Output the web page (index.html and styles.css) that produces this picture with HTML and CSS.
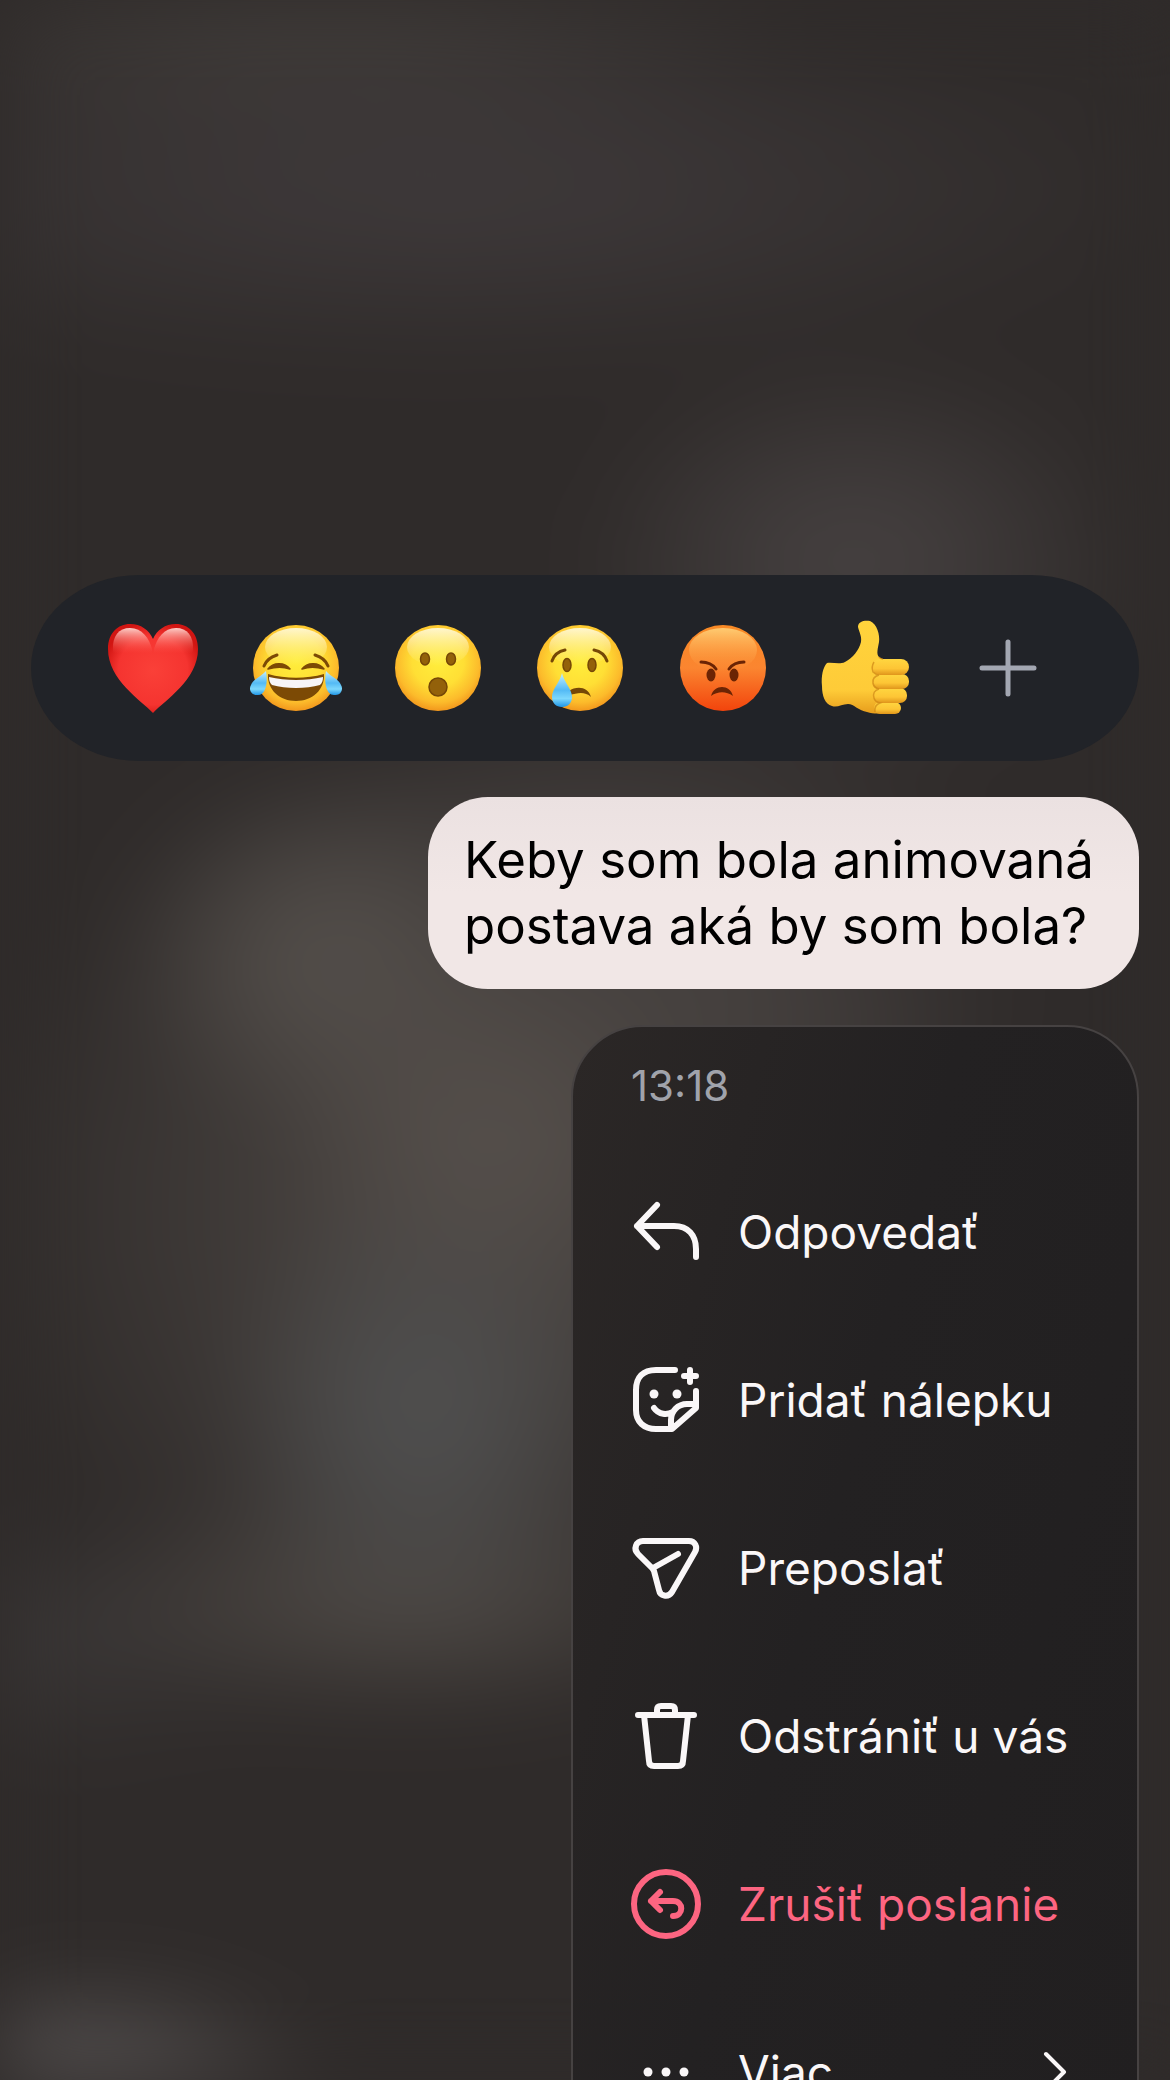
FILE: index.html
```html
<!DOCTYPE html>
<html lang="sk">
<head>
    <meta charset="UTF-8">
    <meta name="viewport" content="width=device-width, initial-scale=1.0">
    <title>Správa</title>
    <link rel="stylesheet" href="styles.css">
</head>
<body>
    <!-- Shared gradients for the emoji -->
    <svg class="defs" width="0" height="0" aria-hidden="true">
        <defs>
            <radialGradient id="face" cx="0.5" cy="0.42" r="0.6">
                <stop offset="0" stop-color="#ffee3c"/>
                <stop offset="0.5" stop-color="#ffdf35"/>
                <stop offset="0.8" stop-color="#fcbb2b"/>
                <stop offset="1" stop-color="#f0901a"/>
            </radialGradient>
            <linearGradient id="shine" x1="0" y1="0" x2="0" y2="1">
                <stop offset="0" stop-color="#fffbe0" stop-opacity="0.9"/>
                <stop offset="1" stop-color="#fff3a0" stop-opacity="0"/>
            </linearGradient>
            <linearGradient id="rage" x1="0" y1="0" x2="0" y2="1">
                <stop offset="0" stop-color="#f98a25"/>
                <stop offset="0.5" stop-color="#fb8530"/>
                <stop offset="1" stop-color="#f2440c"/>
            </linearGradient>
            <linearGradient id="rageShine" x1="0" y1="0" x2="0" y2="1">
                <stop offset="0" stop-color="#ffd27a" stop-opacity="0.9"/>
                <stop offset="1" stop-color="#ff9a40" stop-opacity="0"/>
            </linearGradient>
            <radialGradient id="heart" cx="0.5" cy="0.52" r="0.55">
                <stop offset="0" stop-color="#fa4038"/>
                <stop offset="0.7" stop-color="#f53430"/>
                <stop offset="1" stop-color="#d11512"/>
            </radialGradient>
            <linearGradient id="heartShine" x1="0" y1="0" x2="0" y2="1">
                <stop offset="0" stop-color="#ffd8d2" stop-opacity="0.95"/>
                <stop offset="0.7" stop-color="#ff5a50" stop-opacity="0"/>
            </linearGradient>
            <linearGradient id="tear" x1="0" y1="0" x2="0" y2="1">
                <stop offset="0" stop-color="#c4efff"/>
                <stop offset="0.5" stop-color="#53baf5"/>
                <stop offset="0.75" stop-color="#7dd8fd"/>
                <stop offset="1" stop-color="#1f95e6"/>
            </linearGradient>
            <linearGradient id="hand" x1="0" y1="0" x2="0" y2="1">
                <stop offset="0" stop-color="#ffd43c"/>
                <stop offset="0.75" stop-color="#fecb38"/>
                <stop offset="1" stop-color="#e79d1c"/>
            </linearGradient>
            <linearGradient id="finger" x1="0" y1="0" x2="0" y2="1">
                <stop offset="0" stop-color="#ffd640"/>
                <stop offset="0.6" stop-color="#fdc535"/>
                <stop offset="1" stop-color="#e0951b"/>
            </linearGradient>
        </defs>
    </svg>

    <main class="screen">
        <div class="reactions">
            <button class="reaction" aria-label="Srdce">
                <svg class="emoji" viewBox="0 0 96 96">
                    <path d="M48 93C36 80 3 60 3 29C3 13 13 4 25 4C36 4 44 10 48 19C52 10 60 4 71 4C83 4 93 13 93 29C93 60 60 80 48 93Z" fill="url(#heart)"/>
                    <path d="M8 30C7 16 14 8 25 8C37 8 44 18 47 29L47 44H14Q9 38 8 30Z" fill="url(#heartShine)"/>
                    <path d="M88 30C89 16 82 8 71 8C59 8 52 18 49 29L49 44H82Q87 38 88 30Z" fill="url(#heartShine)"/>
                </svg>
            </button>
            <button class="reaction" aria-label="Smiech">
                <svg class="emoji" viewBox="0 0 96 96">
                    <circle cx="48" cy="48" r="43" fill="url(#face)"/>
                    <ellipse cx="48" cy="27" rx="31" ry="19" fill="url(#shine)"/>
                    <path d="M20 54C38 59 58 59 76 54C77 70 64 81 48 81C32 81 19 70 20 54Z" fill="#7c4a05"/>
                    <path d="M21 57C38 61 58 61 75 57C75 61 74 63 72 65C58 69 38 69 24 65C22 63 21 61 21 57Z" fill="#f7f5f6"/>
                    <path d="M20 49C25 42 37 42 42 49C36 47 27 47 20 49ZM54 49C59 42 71 42 76 49C69 47 60 47 54 49Z" fill="#7c4a05" stroke="#7c4a05" stroke-width="1.5" stroke-linejoin="round"/>
                    <path d="M16 46Q19 38 29 35M80 46Q77 38 67 35" fill="none" stroke="#7c4a05" stroke-width="3" stroke-linecap="round"/>
                    <path d="M18 51C20 62 18 75 10 75C4 76 0 70 3 65C5 59 13 57 18 51Z" fill="url(#tear)"/>
                    <path d="M78 51C76 62 78 75 86 75C92 76 96 70 93 65C91 59 83 57 78 51Z" fill="url(#tear)"/>
                </svg>
            </button>
            <button class="reaction" aria-label="Prekvapenie">
                <svg class="emoji" viewBox="0 0 96 96">
                    <circle cx="48" cy="48" r="43" fill="url(#face)"/>
                    <ellipse cx="48" cy="27" rx="31" ry="19" fill="url(#shine)"/>
                    <g fill="#93610a" stroke="#754706" stroke-width="1.5">
                        <ellipse cx="35" cy="39" rx="4.5" ry="6"/>
                        <ellipse cx="61" cy="39" rx="4.5" ry="6"/>
                        <circle cx="48" cy="67" r="9"/>
                    </g>
                </svg>
            </button>
            <button class="reaction" aria-label="Smútok">
                <svg class="emoji" viewBox="0 0 96 96">
                    <circle cx="48" cy="48" r="43" fill="url(#face)"/>
                    <ellipse cx="48" cy="27" rx="31" ry="19" fill="url(#shine)"/>
                    <g fill="#93610a" stroke="#754706" stroke-width="1.5">
                        <ellipse cx="35" cy="45" rx="4" ry="6.5"/>
                        <ellipse cx="60" cy="45" rx="4" ry="6.5"/>
                    </g>
                    <path d="M20 41Q23 32 33 30M75 41Q72 32 62 30" fill="none" stroke="#754706" stroke-width="3" stroke-linecap="round"/>
                    <path d="M37 71C44 66 56 66 59 77C53 71 45 73 38 75Z" fill="#754706"/>
                    <path d="M30 53C32 62 40 69 40 77C40 83 36 87 30 87C24 87 20 83 20 77C20 69 28 62 30 53Z" fill="url(#tear)"/>
                </svg>
            </button>
            <button class="reaction" aria-label="Hnev">
                <svg class="emoji" viewBox="0 0 96 96">
                    <circle cx="48" cy="48" r="43" fill="url(#rage)"/>
                    <ellipse cx="48" cy="30" rx="34" ry="22" fill="url(#rageShine)"/>
                    <g fill="#6b2404">
                        <ellipse cx="36" cy="55" rx="4.5" ry="6.5"/>
                        <ellipse cx="59" cy="55" rx="4.5" ry="6.5"/>
                        <path d="M36 76C39 64 55 64 58 76C51 71 43 71 36 76Z"/>
                    </g>
                    <path d="M26 42Q36 42 41 49M69 42Q59 42 54 49" fill="none" stroke="#6b2404" stroke-width="3" stroke-linecap="round"/>
                </svg>
            </button>
            <button class="reaction" aria-label="Palec hore">
                <svg class="emoji" viewBox="0 0 96 96">
                    <path d="M10 43C16 42 22 45 28 42C36 38 42 30 44 22C45 16 42 12 41 7C41 1 48 0 53 1C60 4 63 15 62 22C61 28 59 34 62 37L70 42V92C64 94 57 94 50 92C42 91 37 84 31 84C25 84 20 88 15 86C8 84 5 76 5 66C4 56 6 47 10 43Z" fill="url(#hand)"/>
                    <g fill="url(#finger)">
                        <rect x="57" y="82" width="27" height="12" rx="6"/>
                        <rect x="56" y="68" width="34" height="15" rx="7"/>
                        <rect x="55" y="54" width="37" height="15" rx="7"/>
                        <rect x="55" y="39" width="37" height="16" rx="8"/>
                    </g>
                    <path d="M62 37Q63 39 66 39M57 42Q54 47 56 52Q59 55 62 55Q55 57 56 63Q57 68 62 69Q55 71 57 78Q58 82 63 83Q57 85 58 92" fill="none" stroke="#cd8616" stroke-width="1.5" stroke-opacity="0.7"/>
                </svg>
            </button>
            <button class="reaction" aria-label="Pridať reakciu">
                <svg class="emoji" viewBox="0 0 96 96">
                    <path d="M22 48H74M48 22V74" fill="none" stroke="#a3a7b2" stroke-width="5" stroke-linecap="round"/>
                </svg>
            </button>
        </div>

        <p class="bubble">Keby som bola animovaná<br>postava aká by som bola?</p>

        <div class="menu">
            <time class="menu-time" datetime="13:18">13:18</time>
            <button class="menu-item">
                <svg class="icon" viewBox="0 0 72 72">
                    <path d="M27 9L7 30L27 51M7 30H44C58 30 66 39 66 53V61"/>
                </svg>
                <span>Odpovedať</span>
            </button>
            <button class="menu-item">
                <svg class="icon" viewBox="0 0 72 72">
                    <path d="M45 6H26C13 6 6 13 6 26V46C6 58 14 65 26 65H42L66 44V27"/>
                    <path d="M41 64V56C41 47 48 40 57 40H65M24 44C29 51 37 51 43 48"/>
                    <path d="M60 6V18M54 12H66"/>
                    <circle class="solid" cx="24" cy="30" r="4.5"/>
                    <circle class="solid" cx="47" cy="30" r="4.5"/>
                </svg>
                <span>Pridať nálepku</span>
            </button>
            <button class="menu-item">
                <svg class="icon" viewBox="0 0 72 72">
                    <path d="M13 9H59C65 9 68 15 65 20L42 60C38 66 30 64 29 58L24 39Q23 37 22 36L8 22C3 17 6 9 13 9ZM23 36L48 22"/>
                </svg>
                <span>Preposlať</span>
            </button>
            <button class="menu-item">
                <svg class="icon" viewBox="0 0 72 72">
                    <path d="M8 15H64M27 15V10Q27 6 31 6H41Q45 6 45 10V15M14 15L19 61Q19 66 24 66H48Q53 66 53 61L58 15"/>
                </svg>
                <span>Odstrániť u vás</span>
            </button>
            <button class="menu-item danger">
                <svg class="icon" viewBox="0 0 72 72">
                    <circle cx="36" cy="36" r="32"/>
                    <path d="M30 24L21 33L30 42M21 33H43C54 33 54 48 43 48"/>
                </svg>
                <span>Zrušiť poslanie</span>
            </button>
            <button class="menu-item">
                <svg class="icon" viewBox="0 0 72 72">
                    <circle class="solid" cx="18" cy="36" r="4.5"/>
                    <circle class="solid" cx="36" cy="36" r="4.5"/>
                    <circle class="solid" cx="54" cy="36" r="4.5"/>
                </svg>
                <span>Viac</span>
                <svg class="chevron" viewBox="0 0 24 42">
                    <path d="M3 3L21 21L3 39"/>
                </svg>
            </button>
        </div>
    </main>
</body>
</html>
```
FILE: styles.css
```css
* {
    box-sizing: border-box;
}

body {
    margin: 0;
    font-family: 'Inter', 'Noto Sans', sans-serif;
    background-color: #2f2b2a;
}

.defs {
    position: absolute;
}

.screen {
    position: relative;
    isolation: isolate;
    height: 100vh;
    overflow: hidden;
    display: flex;
    flex-direction: column;
    align-items: flex-end;
    padding: 575px 31px 0;
}

/* blurred conversation behind the menu */
.screen::before {
    content: '';
    position: absolute;
    inset: 0;
    z-index: -1;
    filter: blur(40px);
    background:
        radial-gradient(ellipse 18% 11% at 36% 68%, rgba(80, 80, 80, 0.9) 20%, transparent),
        radial-gradient(ellipse 18% 10% at 42% 55%, rgba(85, 79, 75, 0.9) 20%, transparent),
        radial-gradient(ellipse 18% 9% at 28% 46%, rgba(84, 79, 75, 0.9) 20%, transparent),
        radial-gradient(ellipse 30% 6% at 34% 77%, rgba(76, 71, 67, 0.9) 20%, transparent),
        radial-gradient(ellipse 44% 24% at 42% 58%, rgba(72, 67, 64, 0.9) 30%, transparent),
        radial-gradient(ellipse 34% 15% at 54% 47%, rgba(72, 67, 66, 0.8) 20%, transparent),
        radial-gradient(ellipse 24% 10% at 73% 27%, rgba(70, 65, 65, 0.9) 20%, transparent),
        radial-gradient(ellipse 62% 9% at 38% 9%, rgba(62, 57, 58, 0.9) 20%, transparent),
        radial-gradient(ellipse 40% 8% at 28% 0%, rgba(66, 62, 59, 0.9) 20%, transparent),
        radial-gradient(ellipse 30% 6% at 0% 79%, rgba(60, 57, 57, 0.7) 20%, transparent),
        radial-gradient(ellipse 22% 6% at 7% 101%, rgba(94, 90, 90, 0.95) 30%, transparent),
        #2f2b2a;
}

button {
    border: none;
    background: none;
    padding: 0;
    font: inherit;
    color: inherit;
    cursor: pointer;
}

.reactions {
    width: 100%;
    height: 186px;
    flex-shrink: 0;
    display: flex;
    align-items: center;
    padding: 0 60px 0 51px;
    border-radius: 108px / 93px;
    background-color: #212328;
}

.reaction {
    flex: 1;
    display: flex;
    justify-content: center;
}

.emoji {
    width: 96px;
    height: 96px;
}

.bubble {
    margin: 36px 0;
    padding: 30px 45px 30px 36px;
    border-radius: 60px;
    background: linear-gradient(#ebe1e1, #f1e7e6 50%);
    color: #000;
    font-size: 51px;
    line-height: 66px;
}

.menu {
    width: 568px;
    flex-shrink: 0;
    display: flex;
    flex-direction: column;
    border: 2px solid #464242;
    border-radius: 72px;
    background: linear-gradient(105deg, #2b2726, #232122 45%, #211f20);
    color: #faf7f8;
}

.menu-time {
    padding: 34px 58px 37px;
    color: #a0a3ab;
    font-size: 42px;
    line-height: 50px;
}

.menu-item {
    height: 168px;
    display: flex;
    align-items: center;
    gap: 36px;
    padding: 0 70px 0 57px;
    font-size: 46px;
    line-height: 56px;
    white-space: nowrap;
}

.danger {
    color: #fd6581;
}

.icon {
    width: 72px;
    height: 72px;
    flex-shrink: 0;
}

.icon,
.chevron {
    fill: none;
    stroke: currentColor;
    stroke-width: 6;
    stroke-linecap: round;
    stroke-linejoin: round;
}

.chevron {
    width: 24px;
    height: 42px;
    margin-left: auto;
    stroke-width: 4;
}

.solid {
    fill: currentColor;
    stroke: none;
}
```
